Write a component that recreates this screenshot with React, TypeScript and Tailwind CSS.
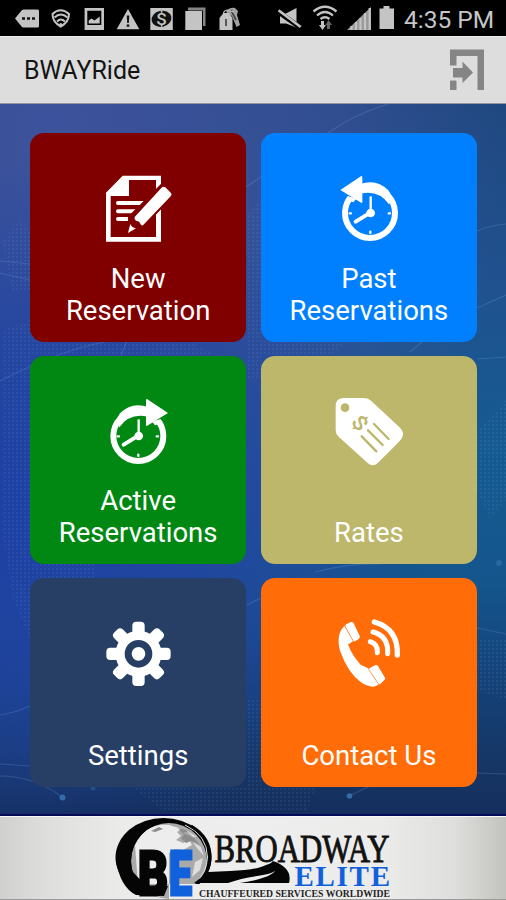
import type { ReactNode } from "react";

const G = "#c4c4c4";

function StatusBar() {
  return (
    <div className="flex h-9 shrink-0 items-start bg-black pl-[14px] pr-3">
      <svg className="shrink-0" width="26" height="36" viewBox="14 0 26 36">
        <path d="M15 18.5 L22 10 Q23 9.5 24 9.5 H37.5 Q39 9.5 39 11 V26 Q39 27.500 37.500 27.500 H24 Q23 27.500 22 27Z" fill={G} />
        <path d="M22 17.200h3v2.600h-3zM27 17.200h3v2.600h-3zM32 17.200h3v2.600h-3z" fill="#111" />
      </svg>
      <svg className="ml-[11px] shrink-0" width="20" height="36" viewBox="51 0 20 36">
        <g fill="none" stroke={G} strokeWidth="2">
          <path d="M52.500 14 Q60.500 6.500 69 14 Q69 22 60.800 26.500 Q52.500 22 52.500 14Z" />
          <path d="M54.500 17.500 Q60.800 11.500 67.500 17.500M57 21.500 Q60.800 17.500 65 21.500" />
        </g>
        <circle cx="60.800" cy="24.500" r="1.500" fill={G} />
      </svg>
      <svg className="ml-[13px] shrink-0" width="21" height="36" viewBox="84 0 21 36">
        <path fillRule="evenodd" d="M84.600 8H104v22H84.600ZM87.300 10.700V25H101.300V10.700Z" fill={G} />
        <path d="M88.700 23.600V20.500L91.500 18.500L94.500 20.500L99.700 16.500V23.600Z" fill={G} />
      </svg>
      <svg className="ml-[11px] shrink-0" width="24" height="36" viewBox="116 0 24 36">
        <path d="M128 9L139.300 29.300H116.700Z" fill={G} />
        <path d="M126.700 15.500h2.600l-.5 7.500h-1.600zM126.700 24.500h2.600v2.300h-2.600z" fill="#111" />
      </svg>
      <svg className="ml-[10px] shrink-0" width="24" height="36" viewBox="150 0 24 36">
        <path d="M150.300 8h22.500v22h-22.500z" fill={G} />
        <ellipse cx="161.500" cy="18.800" rx="10" ry="8" transform="rotate(-12 161.500 18.800)" fill="#111" />
        <text x="161.600" y="24.700" textAnchor="middle" fontFamily="Roboto, sans-serif" fontWeight="500" fontSize="16.500" fill={G}>S</text>
        <path d="M160.800 10.800h1.600v2h-1.600zM160.800 24.800h1.600v2h-1.600z" fill={G} />
      </svg>
      <svg className="ml-[11px] shrink-0" width="22" height="36" viewBox="185 0 22 36">
        <path d="M188 7.500H205.500V26H203V10.500H188Z" fill="#858585" />
        <path d="M185.300 11H202V30H185.300Z" fill={G} />
      </svg>
      <svg className="ml-[11px] shrink-0" width="23" height="36" viewBox="218 0 23 36">
        <path d="M226 12 Q229 7 235 8 L238 11 L237 15 L240 25 L236.500 27 L232 16Z" fill="#a2a2a2" />
        <path d="M219.500 18 L223.500 13 H229 L232.500 18 V30 H219.500Z" fill={G} />
        <path d="M226 19V26M231 10L236 20" stroke="#444" strokeWidth="1.700" fill="none" />
        <path d="M224 17 Q222 11 227 10 L234 12" stroke={G} strokeWidth="1.200" fill="none" />
      </svg>
      <div className="flex-1" />
      <svg className="shrink-0" width="24" height="36" viewBox="278 0 24 36">
        <path d="M280 13.500H286L296.500 8V27.500L286 23.500H280Z" fill={G} />
        <path d="M277 11L301 28" stroke="#000" strokeWidth="5" />
        <path d="M278.500 10.300L300.700 27" stroke={G} strokeWidth="2.600" />
      </svg>
      <svg className="ml-[10px] shrink-0" width="26" height="36" viewBox="312 0 26 36">
        <g fill="none" stroke={G} strokeWidth="2.300">
          <path d="M313.500 11.500Q325 2 336.500 11.500M317 15.500Q325 8.500 333 15.500M320.500 19Q325 15.500 329.500 19" />
        </g>
        <path d="M321 21h3v4h2l-3.500 5-3.500-5h2z" fill={G} />
        <path d="M327 29v-4h-1.500l3-5 3.500 5h-2v4z" fill="#666" />
      </svg>
      <svg className="ml-[9px] shrink-0" width="25" height="36" viewBox="347 0 25 36">
        <path d="M347 30L371 7V30Z" fill="#999" />
        <path d="M351.500 26V30M356 22V30M360.500 18V30M365 13V30M369.700 8V30" stroke={G} strokeWidth="2.200" />
      </svg>
      <svg className="ml-[7px] shrink-0" width="16" height="36" viewBox="379 0 16 36">
        <path d="M383.500 6H389.500V8.500H394V29H379.500V8.500H383.500Z" fill={G} />
      </svg>
      <span className="ml-[9px] w-[90px] whitespace-nowrap pt-[2px] text-[24.500px] leading-[36px] text-[#c6c6c6]">4:35 PM</span>
    </div>
  );
}

function Header() {
  return (
    <header className="flex h-[68px] shrink-0 items-center justify-between border-b border-t border-b-[#96979f] border-t-[#eeeeee] bg-[#dddddd] pl-6 pr-[21px]">
      <h1 className="pt-[2px] text-[25px] leading-8 text-[#141414]">BWAYRide</h1>
      <svg width="36" height="42" viewBox="0 0 36 42" fill="#858585">
        <path d="M1 .5H35V41H28.500V7H7.500V16.500H1Z" />
        <path d="M1 32.500Q1 31.500 2 31.500H6.500Q7.500 31.500 7.500 32.500V41H1ZM4 19H13.500V12.500L24 23.500L13.500 34V28.500H4Z" />
      </svg>
    </header>
  );
}

function Backdrop() {
  return (
    <svg className="absolute inset-0" width="506" height="712" viewBox="0 104 506 712" fill="none">
      <defs>
        <pattern id="dots" width="4" height="4" patternUnits="userSpaceOnUse">
          <rect width="2" height="2" fill="#7fb4e8" />
        </pattern>
      </defs>
      <g fill="url(#dots)" opacity=".1">
        <path d="M3 240L20 220L30 230V290H12ZM4 330L30 320L90 341H190L215 355H30V640L14 600L2 530ZM247 215L261 200V380H247ZM261 341H350L330 355H261ZM30 564H95V578H30Z" />
        <path d="M477 430L506 400V500L490 520L477 490ZM477 640H506V700L477 690ZM247 700H261V786H317L305 812H165L130 786H247Z" />
      </g>
      <g stroke="#79a8dc" strokeWidth="1.200" opacity=".24">
        <path d="M328 133Q355 114 388 104M246 187L261 177M477 231Q492 225 506 224M410 352L422 342M477 308L506 295M477 359L506 357M0 261L30 264M0 273L30 280M0 381Q60 350 105 342M121 355L127 341M247 605L261 598M0 715Q14 713 30 706M0 776Q34 776 62 797M0 764L30 766M477 628L506 634M349 796L370 786M477 773L506 774M315 572Q350 563 380 564" />
      </g>
      <g fill="#397bb8"><circle cx="62.500" cy="797.500" r="3" opacity=".8" /><circle cx="349.500" cy="796" r="2.800" opacity=".8" /><circle cx="93" cy="788" r="2.500" opacity=".35" /><circle cx="499" cy="563" r="3" opacity=".5" /></g>
    </svg>
  );
}

function NewIcon() {
  return (
    <svg width="100" height="90" viewBox="0 0 300 270" fill="#fff">
      <path fillRule="evenodd" d="M98 32H213V230H48V83ZM117 45V93H62V216H198V45Z" />
      <path d="M84 114H164M84 139H146M84 162H124" stroke="#fff" strokeWidth="12" strokeLinecap="round" />
      <path d="M218 60L247 89L152 188L119 204L120 157Z" fill="#800000" stroke="#800000" strokeWidth="12" />
      <path d="M216 67Q221 63 226 67L243 84Q247 89 242 94L159 181Q153 183 151 176Q149 169 141 168Q132 165 134 156Z" />
      <path d="M121 176Q124 187 138 190L114 204Z" />
    </svg>
  );
}

function ClockIcon({ forward = false }: { forward?: boolean }) {
  const color = forward ? "#008813" : "#0080ff";
  return (
    <svg width="100" height="90" viewBox="0 0 300 270">
      <g transform={forward ? "translate(-6 0)" : undefined}>
        <g transform={forward ? "translate(301 0) scale(-1 1)" : undefined}>
          <circle cx="150" cy="144" r="75" fill="none" stroke="#fff" strokeWidth="18" />
          <path d="M78 91L100 99L129 112L143 82L120 68Z" fill={color} />
          <path d="M120 57Q170 40 205 76L219 100L207 118Q176 74 122 86Z" fill="#fff" />
          <path d="M93 96L82 106L100 112L108 102Z" fill="#fff" />
          <path d="M61 75L124 33Q127 32 127 38V112Q126 116 121 112Z" fill="#fff" />
        </g>
        <g stroke="#fff" strokeLinecap="round">
          <path d="M152 143V94" strokeWidth="7" strokeLinecap="butt" /><path d="M151 143L107 170" strokeWidth="12" />
          <path d="M89 145H93M206 145H210M151 200V204" strokeWidth="7" />
        </g>
        <circle cx="152" cy="144" r="13" fill="#fff" />
      </g>
    </svg>
  );
}

function TagIcon() {
  return (
    <svg width="100" height="90" viewBox="0 -8 300 270">
      <path d="M72 22H132Q145 22 154 31L240 111Q254 124 246 142Q241 151 174 216Q158 231 143 217L56 138Q47 130 47 118V47Q47 22 72 22Z" fill="#fff" />
      <circle cx="75" cy="51" r="13" fill="#bdb76b" />
      <g stroke="#bdb76b" strokeWidth="7" strokeLinecap="round"><path d="M125 137L169 182M144 119L188 163M162 100L206 145" /></g>
      <text textAnchor="middle" y="21" transform="translate(120 97) rotate(50) scale(1.2 1)" fontFamily="Roboto, sans-serif" fontSize="60" fontWeight="500" fill="#bdb76b">$</text>
    </svg>
  );
}

function GearIcon() {
  return (
    <svg width="100" height="90" viewBox="0 0 300 270" fill="#fff">
      {[0, 45, 90, 135].map((angle) => (
        <rect key={angle} x="127" y="35" width="37" height="193" rx="12" transform={`rotate(${angle} 145.500 131.500)`} />
      ))}
      <circle cx="145.500" cy="131.500" r="69" />
      <circle cx="145.500" cy="131.500" r="31" fill="none" stroke="#283f65" strokeWidth="21" />
    </svg>
  );
}

function PhoneIcon() {
  return (
    <svg width="100" height="90" viewBox="0 0 300 270" fill="#fff">
      <path d="M74 47L100 92L93 98L84 103Q95 135 122 164L145 175L178 222Q159 240 123 217Q83 187 60 122Q47 71 74 47Z" />
      <path d="M80 42L93 36Q98 35 101 40L119 78Q121 83 117 86L105 94Q101 96 99 92L76 49Q74 45 80 42ZM151 173L165 166Q171 163 174 168L195 203Q197 207 193 210L181 222Q177 224 174 220L147 180Q145 176 151 173Z" />
      <path d="M74 48L102 97M144 175L177 224" stroke="#ff6c08" strokeWidth="2" />
      <g fill="none" stroke="#fff" strokeLinecap="round">
        <path d="M151 95Q174 102 172 128" strokeWidth="15" />
        <path d="M159 66Q206 78 203 131" strokeWidth="15" />
        <path d="M163 36Q235 56 232 135" strokeWidth="16" />
      </g>
    </svg>
  );
}

function Tile({ color, icon, children }: { color: string; icon: ReactNode; children: ReactNode }) {
  return (
    <button className={`flex h-[208.5px] flex-col items-center justify-between rounded-[14px] pb-[15px] pt-8 text-[27.500px] leading-8 text-white ${color}`}>
      <span className="h-[90px] pl-[3px]">{icon}</span>
      <span className="-mt-8">{children}</span>
    </button>
  );
}

function Footer() {
  return (
    <footer className="flex h-[84px] shrink-0 justify-center border-b border-t border-b-[#999] border-t-[#f8f8f8] bg-[linear-gradient(to_right,#d0d0ce_0%,#dededc_9%,#ebebea_24%,#eeeeee_50%,#ebebea_76%,#dededc_90%,#c2c2be_100%)]">
      <svg width="286" height="82" viewBox="109 817 286 82">
        <defs>
          <clipPath id="globe"><circle cx="169" cy="861" r="39" /></clipPath>
          <clipPath id="disc"><path d="M109 810H215V884H168V899H109Z" /></clipPath>
        </defs>
        <g clipPath="url(#disc)">
          <ellipse cx="162.500" cy="857.500" rx="48" ry="39.500" fill="#050505" />
          <g clipPath="url(#globe)">
            <ellipse cx="168" cy="861" rx="38" ry="38" fill="#aaa" />
            <path d="M134 845Q145 823 168 825L181 829L176 832L180 836L175 840L182 843L188 840L191 845L182 850L174 849L168 853V884H137Z" fill="#ededed" />
            <path d="M150 831L158 827L162 829L154 832ZM177 828L188 831L182 833L193 838L199 845L190 841L185 843L180 838L183 835Z" fill="#8c8c8c" />
            <path d="M185 830L196 837L192 837ZM192 842L200 847L203 856L196 848ZM194 862L202 858L199 870L191 877Z" fill="#ddd" />
          </g>
          <path d="M184 825Q206 835 206.500 857Q206 872 194 884" fill="none" stroke="#e5e5e5" strokeWidth="1" />
          <path d="M190 826Q209 837 209 857Q209 873 195 885" fill="none" stroke="#050505" strokeWidth="3" />
        </g>
        <path d="M115 860Q119 887 135 895L163 896L167 886L145 886L132 872Z" fill="#050505" />
        <path d="M207 872L229 871Q256 870 265 865Q277 861 267 859L272 861Q292 868 288 883H239Q278 877 275 866Q279 873 256 876Q240 878 227 883H193Z" fill="#050505" />
        <text x="137" y="895" textLength="30" lengthAdjust="spacingAndGlyphs" fontFamily="Roboto, sans-serif" fontWeight="900" fontSize="61" stroke="#050505" strokeWidth="3" fill="#050505">B</text>
        <text x="168" y="895" textLength="23" lengthAdjust="spacingAndGlyphs" fontFamily="Roboto, sans-serif" fontWeight="900" fontSize="61" stroke="#1261dc" strokeWidth="3" fill="#1261dc">E</text>
        <text x="213.500" y="861.500" textLength="175" lengthAdjust="spacingAndGlyphs" fontFamily="Liberation Serif, serif" fontSize="39" stroke="#111" strokeWidth=".9" fill="#111">BROADWAY</text>
        <text x="293.500" y="885.500" textLength="95.500" fontFamily="Liberation Serif, serif" fontWeight="700" fontSize="29" fill="#1261dc">ELITE</text>
        <text x="198" y="896.500" textLength="191" lengthAdjust="spacingAndGlyphs" fontFamily="Liberation Serif, serif" fontWeight="700" fontSize="10" fill="#242424">CHAUFFEURED SERVICES WORLDWIDE</text>
      </svg>
    </footer>
  );
}

export default function App() {
  return (
    <div className="flex h-[900px] w-[506px] flex-col overflow-hidden font-['Roboto',sans-serif]">
      <StatusBar />
      <Header />
      <main className="relative h-[712px] shrink-0 border-b-2 border-[#050b57] bg-[radial-gradient(ellipse_at_0%_57%,#1d40a4_0%,#1d40a4b0_28%,transparent_60%),radial-gradient(ellipse_at_10%_5%,#3d529c_0%,#3d529ca0_42%,transparent_70%),linear-gradient(to_bottom,#204880_0%,#20518e_24%,#155b91_50%,#14558c_68%,#14437a_80%,#163361_96%,#152e5d_100%)]">
        <Backdrop />
        <div className="relative grid grid-cols-2 gap-x-[14.5px] gap-y-[14px] pl-[30px] pr-[29px] pt-[29px]">
          <Tile color="bg-[#800000]" icon={<NewIcon />}>New<br />Reservation</Tile>
          <Tile color="bg-[#0080ff]" icon={<ClockIcon />}>Past<br />Reservations</Tile>
          <Tile color="bg-[#008813]" icon={<ClockIcon forward />}>Active<br />Reservations</Tile>
          <Tile color="bg-[#bdb76b]" icon={<TagIcon />}>Rates</Tile>
          <Tile color="bg-[#283f65]" icon={<GearIcon />}>Settings</Tile>
          <Tile color="bg-[#ff6c08]" icon={<PhoneIcon />}>Contact Us</Tile>
        </div>
      </main>
      <Footer />
    </div>
  );
}
